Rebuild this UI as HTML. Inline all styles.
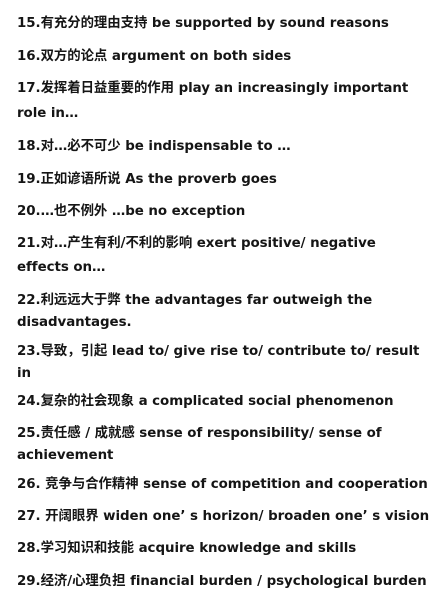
<!DOCTYPE html>
<html><head><meta charset="utf-8"><style>
html,body{margin:0;padding:0;background:#fff;}
body{width:443px;height:596px;position:relative;overflow:hidden;}
.l{position:absolute;left:17px;white-space:nowrap;font-family:"DejaVu Sans","Noto Sans CJK SC",sans-serif;font-weight:bold;font-size:13.4px;line-height:18px;color:#151515;letter-spacing:-0.05px;}
</style></head><body>
<div class="l" style="top:15px">15.有充分的理由支持 be supported by sound reasons</div>
<div class="l" style="top:48px">16.双方的论点 argument on both sides</div>
<div class="l" style="top:80px">17.发挥着日益重要的作用 play an increasingly important</div>
<div class="l" style="top:105px">role in…</div>
<div class="l" style="top:138px">18.对…必不可少 be indispensable to …</div>
<div class="l" style="top:171px">19.正如谚语所说 As the proverb goes</div>
<div class="l" style="top:203px">20.…也不例外 …be no exception</div>
<div class="l" style="top:235px">21.对…产生有利/不利的影响 exert positive/ negative</div>
<div class="l" style="top:259px">effects on…</div>
<div class="l" style="top:292px">22.利远远大于弊 the advantages far outweigh the</div>
<div class="l" style="top:314px">disadvantages.</div>
<div class="l" style="top:343px">23.导致，引起 lead to/ give rise to/ contribute to/ result</div>
<div class="l" style="top:365px">in</div>
<div class="l" style="top:393px">24.复杂的社会现象 a complicated social phenomenon</div>
<div class="l" style="top:425px">25.责任感 / 成就感 sense of responsibility/ sense of</div>
<div class="l" style="top:447px">achievement</div>
<div class="l" style="top:476px">26. 竞争与合作精神 sense of competition and cooperation</div>
<div class="l" style="top:508px">27. 开阔眼界 widen one’ s horizon/ broaden one’ s vision</div>
<div class="l" style="top:540px">28.学习知识和技能 acquire knowledge and skills</div>
<div class="l" style="top:573px">29.经济/心理负担 financial burden / psychological burden</div>
</body></html>
